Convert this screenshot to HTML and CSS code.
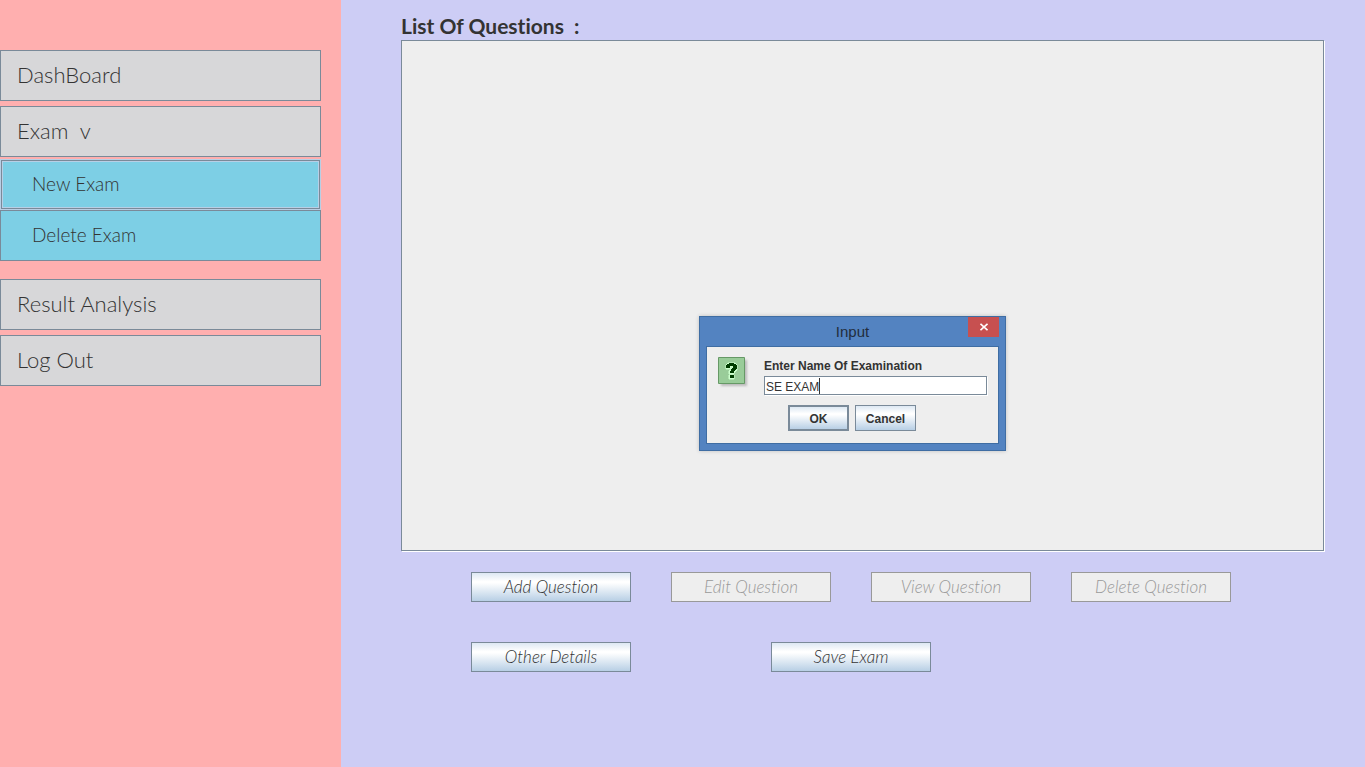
FILE: index.html
```html
<!DOCTYPE html>
<html lang="en">
<head>
<meta charset="utf-8">
<title>Exam Manager</title>
<link rel="stylesheet" href="styles.css">
</head>
<body>
<div class="app">
  <nav class="sidebar">
    <button class="nav-item" type="button">DashBoard</button>
    <button class="nav-item" type="button">Exam&nbsp; v</button>
    <div class="submenu">
      <button class="nav-item sub-item focused" type="button">New Exam</button>
      <button class="nav-item sub-item" type="button">Delete Exam</button>
    </div>
    <button class="nav-item" type="button">Result Analysis</button>
    <button class="nav-item" type="button">Log Out</button>
  </nav>
  <main class="content">
    <h1 class="heading">List Of Questions&nbsp; :</h1>
    <div class="question-list"></div>
    <div class="actions">
      <button class="action" type="button">Add Question</button>
      <button class="action" type="button" disabled>Edit Question</button>
      <button class="action" type="button" disabled>View Question</button>
      <button class="action" type="button" disabled>Delete Question</button>
    </div>
    <div class="actions actions-wide">
      <button class="action" type="button">Other Details</button>
      <button class="action" type="button">Save Exam</button>
    </div>
    <form class="dialog" role="dialog" aria-labelledby="dialog-title">
      <div class="titlebar">
        <h2 class="dialog-title" id="dialog-title">Input</h2>
        <button class="close" type="button" aria-label="Close">
          <svg width="8" height="8" viewBox="0 0 8 8"><path d="M.5.8 7.5 7.2M7.5.8.5 7.2" stroke="#fff" stroke-width="1.6" fill="none"/></svg>
        </button>
      </div>
      <div class="dialog-body">
        <div class="prompt">
          <svg class="question-icon" width="32" height="32" viewBox="0 0 32 32" aria-hidden="true">
            <path class="icon-shadow" d="M3 3h26v26H3z"/>
            <path d="M.5.5h26v26H.5z" fill="#9c9" stroke="#669966"/>
            <path d="M8 11V8l2-2h7l2 2v5l-3 3v1h-5v-3l3-3V9.500h-1V12H8zM11 18h5v4h-5z" fill="#cfc" stroke="#cfc"/>
            <path d="M8 8h1V7h2V6h5v1h2v1h1v4h-1v1h-1v1h-1v2h-4v-2h1v-2h1v-1h1V9h-3v2H8zM12 18h4v3h-4z" fill="#003c00"/>
          </svg>
          <div class="field">
            <label class="field-label" for="exam-name">Enter Name Of Examination</label>
            <div class="field-box">
              <input class="field-input" id="exam-name" type="text" value="SE EXAM">
              <span class="caret"></span>
            </div>
          </div>
        </div>
        <div class="dialog-actions">
          <button class="dialog-button default" type="submit">OK</button>
          <button class="dialog-button" type="button">Cancel</button>
        </div>
      </div>
    </form>
  </main>
</div>
</body>
</html>
```
FILE: styles.css
```css
* { box-sizing: border-box; }

body {
  margin: 0;
  color: #333;
  font-family: "Century Gothic", Lato, sans-serif;
  font-variant-ligatures: none;
}

button {
  margin: 0;
  color: inherit;
  font-family: inherit;
  font-variant-ligatures: none;
}

.app {
  display: flex;
  min-height: 100vh;
}

.sidebar {
  display: flex;
  flex: 0 0 341px;
  flex-direction: column;
  gap: 5px;
  padding: 50px 20px 0 0;
  background: #ffafaf;
}

.nav-item {
  width: 100%;
  height: 51px;
  padding: 0 16px 2px;
  border: 1px solid #7a8a99;
  background: #d7d7d9;
  font-size: 22px;
  font-weight: 300;
  text-align: left;
}

.submenu {
  margin: -3px 0 13px;
}

.sub-item {
  display: block;
  padding: 0 31px 2px;
  background: #7dcfe5;
  font-size: 19px;
}

.focused {
  border: 1px solid #b8cfe5;
  box-shadow: inset 0 0 0 1px #7a8a99, inset 0 0 0 2px #b8cfe5;
}

.content {
  position: relative;
  display: flex;
  flex: 1;
  flex-direction: column;
  padding: 12px 41px 95px 60px;
  background: #cdcdf5;
}

.heading {
  margin: 0;
  font-size: 21px;
  font-weight: 700;
  line-height: 28px;
}

.question-list {
  flex: 1;
  min-height: 240px;
  border: 1px solid #7a8a99;
  background: #eee;
  box-shadow: 1px 1px 0 #fff;
}

.actions {
  display: flex;
  gap: 40px;
  margin-top: 21px;
  padding-left: 70px;
}

.actions-wide {
  gap: 140px;
  margin-top: 40px;
}

.action {
  width: 160px;
  height: 30px;
  padding: 0 0 2px;
  border: 1px solid #7a8a99;
  background: linear-gradient(#dde8f3 0%, #fff 30%, #fff 35%, #b8cfe5 100%);
  font-size: 17px;
  font-style: italic;
  font-weight: 300;
}

.action:disabled {
  border-color: #999;
  background: #eee;
  color: #999;
}

.dialog {
  position: absolute;
  inset: 0 1px 0 0;
  width: 307px;
  height: fit-content;
  margin: auto;
  padding: 0 6px 6px;
  border: 1px solid #3f6da3;
  background: #5383c1;
  box-shadow: 0 0 4px rgba(0, 0, 0, 0.2);
  font-family: "Liberation Sans", Arial, sans-serif;
}

.titlebar {
  display: grid;
  grid-template-columns: 31px 1fr 31px;
  align-items: start;
  height: 29px;
}

.dialog-title {
  grid-column: 2;
  margin: 0;
  color: #222d3d;
  font-size: 15px;
  font-weight: 400;
  line-height: 29px;
  text-align: center;
}

.close {
  display: flex;
  align-items: center;
  justify-content: center;
  height: 20px;
  padding: 0;
  border: 0;
  background: #c75050;
}

.dialog-body {
  padding: 10px 11px 12px;
  border: 1px solid #3f6da3;
  background: #eee;
}

.prompt {
  display: flex;
  gap: 14px;
}

.question-icon {
  flex: none;
}

.icon-shadow {
  fill: #bbb;
  filter: blur(1px);
}

.field {
  flex: 1;
}

.field-label {
  display: block;
  font-size: 12px;
  font-weight: 700;
  line-height: 19px;
}

.field-box {
  position: relative;
}

.field-input {
  display: block;
  width: 100%;
  height: 19px;
  padding: 2px 1px 0;
  border: 1px solid #7a8a99;
  border-radius: 0;
  outline: 0;
  background: #fff;
  box-shadow: 1px 1px 0 #fff;
  color: #333;
  font: 12px "Liberation Sans", Arial, sans-serif;
}

.caret {
  position: absolute;
  top: 2px;
  left: 55px;
  width: 1px;
  height: 16px;
  background: #333;
}

.dialog-actions {
  display: flex;
  gap: 6px;
  justify-content: center;
  margin-top: 10px;
  padding-right: 1px;
}

.dialog-button {
  width: 61px;
  height: 26px;
  padding: 2px 0 0;
  border: 1px solid #7a8a99;
  background: linear-gradient(#dde8f3 0%, #fff 30%, #fff 35%, #b8cfe5 100%);
  font-size: 12px;
  font-weight: 700;
}

.default {
  border-width: 2px;
}
```
